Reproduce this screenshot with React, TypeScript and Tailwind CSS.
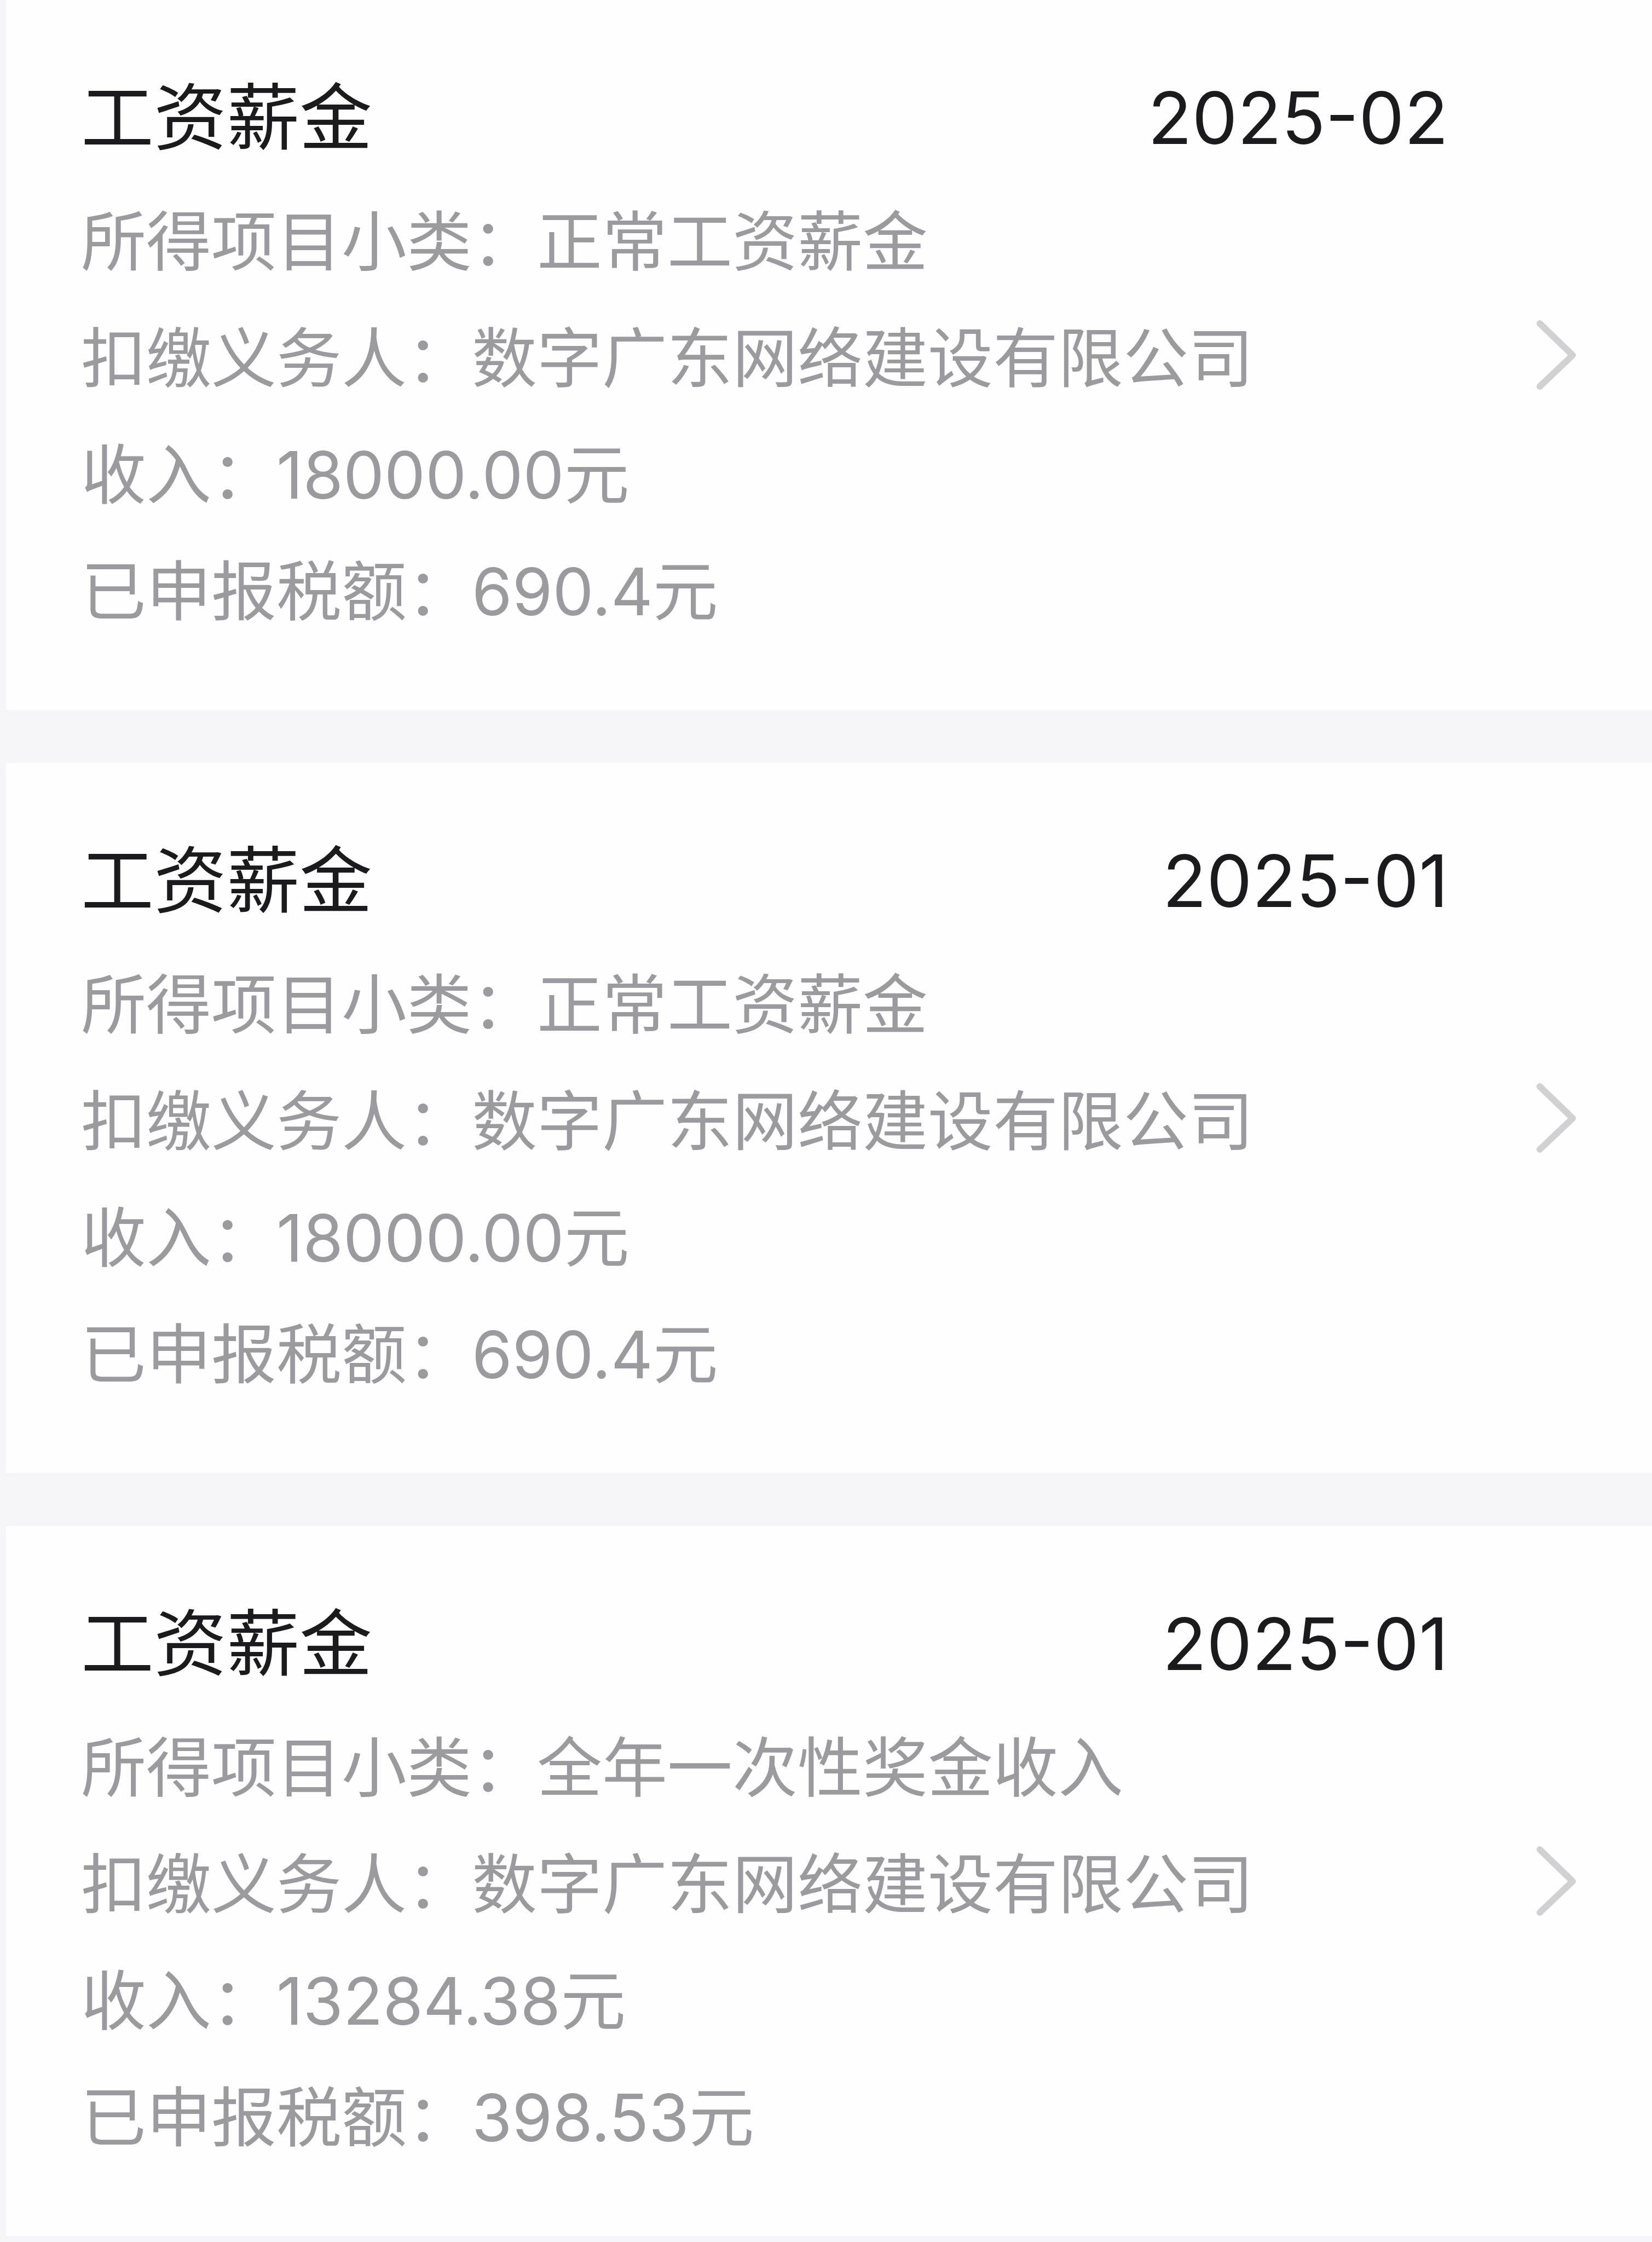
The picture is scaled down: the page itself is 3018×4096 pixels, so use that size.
import React from "react";

type Item = { date: string; sub: string; income: string; tax: string };

const items: Item[] = [
  { date: "2025-02", sub: "正常工资薪金", income: "18000.00", tax: "690.4" },
  { date: "2025-01", sub: "正常工资薪金", income: "18000.00", tax: "690.4" },
  { date: "2025-01", sub: "全年一次性奖金收入", income: "13284.38", tax: "398.53" },
];

function Chevron() {
  return (
    <svg viewBox="0 0 72 127" className="w-[72px] h-[127px] shrink-0" fill="none">
      <path
        d="M6 6 L66 64 L6 121"
        stroke="#d1d1d5"
        strokeWidth="12"
        strokeLinecap="round"
        strokeLinejoin="round"
      />
    </svg>
  );
}

function Card({ item }: { item: Item }) {
  return (
    <div className="flex items-center bg-[#fefefe] pl-[137px] pr-[139px]">
      <div className="flex flex-1 flex-col pt-[135px] pb-[109px]">
        <div className="flex items-baseline justify-between text-[#1b1b1d]">
          <span className="text-[133px] leading-[160px]">工资薪金</span>
          <span className="text-[132px] leading-[160px]">{item.date}</span>
        </div>
        <div className="mt-[41px] flex flex-col text-[119px] leading-[213px] text-[#9a9a9f]">
          <div>所得项目小类：{item.sub}</div>
          <div>扣缴义务人：数字广东网络建设有限公司</div>
          <div>收入：{item.income}元</div>
          <div>已申报税额：{item.tax}元</div>
        </div>
      </div>
      <div className="ml-[161px]">
        <Chevron />
      </div>
    </div>
  );
}

export default function App() {
  return (
    <div className="min-h-[4096px] w-[3018px] bg-[#f5f5f9] pl-[11px] flex flex-col gap-[97px] font-['Inter','Noto_Sans_CJK_SC',sans-serif]">
      {items.map((it, i) => (
        <Card key={i} item={it} />
      ))}
    </div>
  );
}
